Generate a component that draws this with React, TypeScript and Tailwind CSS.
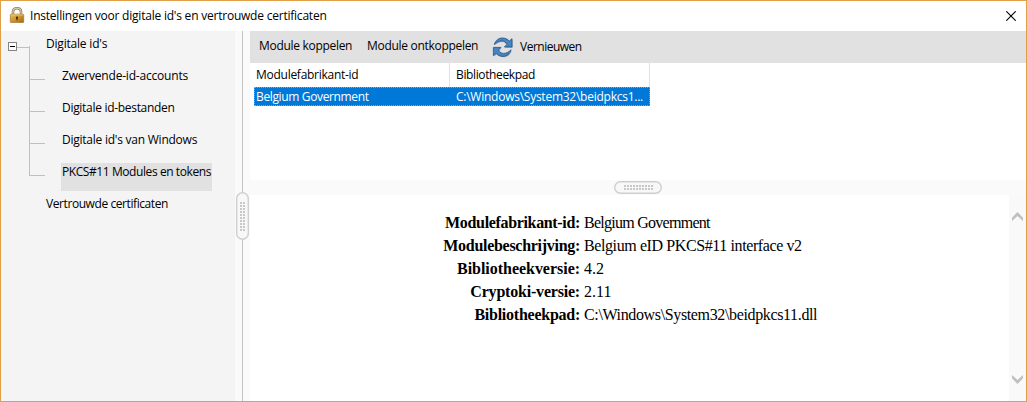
import React from "react";

type TreeItem = { label: string; tracking: string; selected?: boolean };

const children: TreeItem[] = [
  { label: "Zwervende-id-accounts", tracking: "tracking-[-0.2px]" },
  { label: "Digitale id-bestanden", tracking: "tracking-[-0.3px]" },
  { label: "Digitale id's van Windows", tracking: "tracking-[-0.24px]" },
  { label: "PKCS#11 Modules en tokens", tracking: "tracking-[-0.42px]", selected: true },
];

type Detail = { label: string; value: string; labelTracking: string; valueTracking: string };

const details: Detail[] = [
  { label: "Modulefabrikant-id:", value: "Belgium Government", labelTracking: "tracking-[-0.34px]", valueTracking: "tracking-[-0.74px]" },
  { label: "Modulebeschrijving:", value: "Belgium eID PKCS#11 interface v2", labelTracking: "tracking-[-0.29px]", valueTracking: "tracking-[-0.4px]" },
  { label: "Bibliotheekversie:", value: "4.2", labelTracking: "tracking-[-0.03px]", valueTracking: "tracking-normal" },
  { label: "Cryptoki-versie:", value: "2.11", labelTracking: "tracking-[-0.2px]", valueTracking: "tracking-normal" },
  { label: "Bibliotheekpad:", value: "C:\\Windows\\System32\\beidpkcs11.dll", labelTracking: "tracking-[-0.25px]", valueTracking: "tracking-[-0.36px]" },
];

function LockIcon() {
  return (
    <svg width="16" height="16" viewBox="0 0 16 16">
      <defs>
        <linearGradient id="lock" x1="0" y1="0" x2="1" y2="1">
          <stop offset="0" stopColor="#e8bd68" />
          <stop offset="0.5" stopColor="#cd942f" />
          <stop offset="1" stopColor="#a0660f" />
        </linearGradient>
      </defs>
      <path d="M4 8V4.500C4 2.200 5.600 1.300 8 1.300s4 0.900 4 3.200V8" fill="none" stroke="#8f8158" strokeWidth="2.600" />
      <path d="M4 8V4.500C4 2.200 5.600 1.300 8 1.300s4 0.900 4 3.200V8" fill="none" stroke="#d9cfae" strokeWidth="1.100" />
      <rect x="1.300" y="7.200" width="13.400" height="8.300" rx="0.600" fill="url(#lock)" stroke="#a8752a" strokeWidth="0.700" />
      <path d="M1.800 7.900h12.500" stroke="#f0cf86" strokeWidth="0.800" />
      <circle cx="8" cy="10.700" r="1.100" fill="#3c2a12" />
      <path d="M8 10.700v2.500" stroke="#3c2a12" strokeWidth="1.100" />
    </svg>
  );
}

const topArrow =
  "M2.300 7.600C3.500 3.400 6.500 1 10.300 1c2.900 0 5.200 1.100 7 3l2.700-2.300V10h-7.600l2.500-2.500C13.600 5.300 12.200 4 9.900 4 7 4 4.600 5.300 2.300 7.600z";

function RefreshIcon() {
  return (
    <svg width="22" height="21" viewBox="0 0 22 21">
      <g transform="translate(0.8 0.900)" fill="#000" opacity="0.18">
        <path d={topArrow} />
        <path d={topArrow} transform="rotate(180 10.700 10.200)" />
      </g>
      <g fill="#4585c4" stroke="#23507f" strokeWidth="0.8" strokeLinejoin="round">
        <path d={topArrow} />
        <path d={topArrow} transform="rotate(180 10.700 10.200)" />
      </g>
    </svg>
  );
}

function Grip({ vertical }: { vertical?: boolean }) {
  const dots = Array.from({ length: 10 }, (_, i) => i);
  return (
    <svg
      width={vertical ? 13 : 48}
      height={vertical ? 48 : 13}
      viewBox={vertical ? "0 0 13 48" : "0 0 48 13"}
    >
      <g transform={vertical ? "matrix(0 1 1 0 0 0)" : undefined}>
        <rect x="0.7" y="0.7" width="46.600" height="11.600" rx="5.800" fill="#f8f8f8" stroke="#cfcfcf" strokeWidth="1.400" />
        {dots.map((i) => (
          <g key={i} fill="#c8c8c8">
            <rect x={10 + i * 3} y="4" width="2" height="2" />
            <rect x={10 + i * 3} y="7" width="2" height="2" />
          </g>
        ))}
      </g>
    </svg>
  );
}

function Chevron({ down }: { down?: boolean }) {
  return (
    <svg width="11" height="9" viewBox="0 0 11 9" className={down ? "rotate-180" : ""}>
      <path d="M0 5.700L5.500 0 11 5.700V9L5.500 4 0 9z" fill="#bfbfbf" />
    </svg>
  );
}

export default function App() {
  return (
    <div className="flex h-[402px] w-[1027px] flex-col overflow-hidden border border-[#e0a04a] bg-white font-['Open_Sans','Noto_Sans',sans-serif] text-[12px] leading-[18px] whitespace-nowrap text-black">
      <header className="flex h-[30px] shrink-0 items-center pr-2.5 pl-2">
        <div className="mb-0.5">
          <LockIcon />
        </div>
        <span className="ml-[5px] tracking-[-0.22px]">Instellingen voor digitale id's en vertrouwde certificaten</span>
        <svg className="ml-auto" width="10" height="10" viewBox="0 0 10 10">
          <path d="M0.300 0.300l9.400 9.400M9.700 0.300l-9.400 9.400" stroke="#000" strokeWidth="1.100" />
        </svg>
      </header>

      <div className="flex min-h-0 flex-1">
        <nav className="w-[234px] shrink-0 bg-[#f4f4f4]">
          <div className="flex h-8">
            <div className="flex w-7 pt-[11px] pl-[7px]">
              <div className="flex size-[9px] items-center justify-center border border-[#848484] bg-white">
                <div className="h-px w-[5px] bg-black" />
              </div>
              <div className="mt-[5px] h-px flex-1 bg-[#c0c0c0]" />
            </div>
            <div className="mt-[15px] w-px bg-[#c0c0c0]" />
            <span className="mt-1 ml-4 tracking-[-0.2px]">Digitale id's</span>
          </div>
          {children.map((item) => (
            <div key={item.label} className="flex h-8 pl-7">
              <div className="w-4">
                <div className="h-[17px] border-b border-l border-[#c0c0c0]" />
                {!item.selected && <div className="h-[15px] border-l border-[#c0c0c0]" />}
              </div>
              <div className={`mt-1 ml-4 h-7 pl-px ${item.selected ? "w-[151px] bg-[#e1e1e1]" : ""} ${item.tracking}`}>
                {item.label}
              </div>
            </div>
          ))}
          <div className="pt-1 pl-[45px] tracking-[-0.42px]">Vertrouwde certificaten</div>
        </nav>

        <div className="flex w-[15px] shrink-0 flex-col items-center bg-[#fafafa]">
          <div className="h-[161px] w-px bg-[#c4c4c4]" />
          <Grip vertical />
          <div className="w-px flex-1 bg-[#c4c4c4]" />
        </div>

        <main className="flex min-w-0 flex-1 flex-col">
          <div className="flex h-8 shrink-0 items-center bg-[#e1e1e1] pl-[9px]">
            <span className="mb-0.5 w-[108px] tracking-[-0.3px]">Module koppelen</span>
            <span className="mb-0.5 w-[125px] tracking-[-0.3px]">Module ontkoppelen</span>
            <RefreshIcon />
            <span className="ml-1.5 tracking-[-0.5px]">Vernieuwen</span>
          </div>

          <div className="h-[117px] shrink-0">
            <div className="flex h-6 items-center">
              <div className="flex h-6 w-[200px] items-center border-r border-[#e2e2e2] pl-1.5 tracking-[-0.27px]">Modulefabrikant-id</div>
              <div className="flex h-6 w-[200px] items-center border-r border-[#e2e2e2] pl-1.5 tracking-[-0.37px]">Bibliotheekpad</div>
            </div>
            <div className="ml-1 flex h-[19px] w-[396px] items-center border border-dotted border-[#ff8728] bg-[#0078d7] pl-px text-white">
              <span className="w-[200px] tracking-[-0.36px]">Belgium Government</span>
              <span className="tracking-[-0.25px]">C:\Windows\System32\beidpkcs1...</span>
            </div>
          </div>

          <div className="flex h-[15px] shrink-0 items-center justify-center bg-[#fafafa]">
            <Grip />
          </div>

          <div className="flex min-h-0 flex-1">
            <dl className="flex-1 pt-4 font-['Liberation_Serif',serif] text-[16px] leading-[23px]">
              {details.map((d) => (
                <div key={d.label} className="flex h-[23px]">
                  <dt className={`w-[330px] text-right font-bold ${d.labelTracking}`}>{d.label}</dt>
                  <dd className={`ml-1 ${d.valueTracking}`}>{d.value}</dd>
                </div>
              ))}
            </dl>
            <div className="flex w-[17px] flex-col items-center justify-between bg-[#f9f9f9] pt-[17px] pb-[17px]">
              <Chevron />
              <Chevron down />
            </div>
          </div>
        </main>
      </div>
    </div>
  );
}
